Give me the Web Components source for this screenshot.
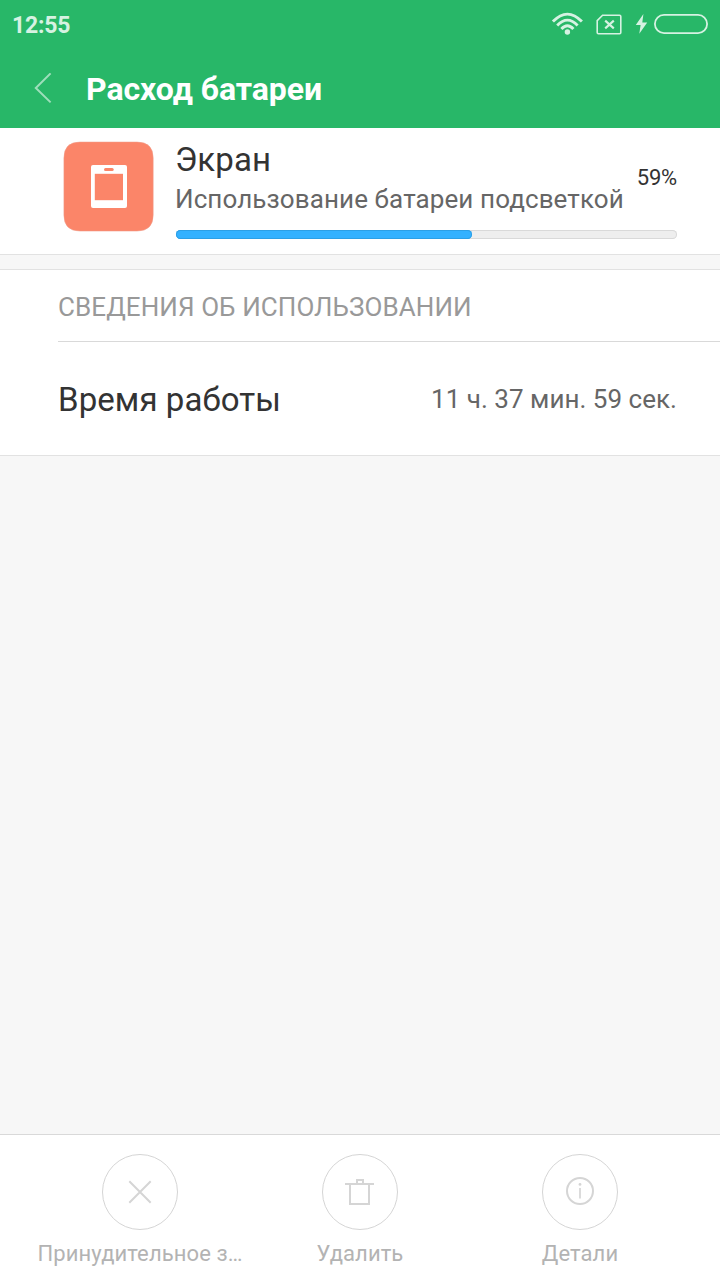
<!DOCTYPE html>
<html lang="ru">
<head>
<meta charset="utf-8">
<title>Расход батареи</title>
<style>
html,body{margin:0;height:100%}
body{font-family:Roboto,"Noto Sans",sans-serif;background:#f7f7f7;color:#333}
</style>
</head>
<body>
<battery-screen></battery-screen>
<script>
const define = (name, html) => {
  const t = document.createElement('template');
  t.innerHTML = html;
  customElements.define(name, class extends HTMLElement {
    constructor() {
      super();
      this.attachShadow({mode: 'open'}).append(t.content.cloneNode(true));
    }
  });
};

define('status-bar', `
<style>
:host{display:flex;justify-content:space-between;height:50px;padding-left:12px;box-sizing:border-box;color:#d6f2e2}
.time{font-weight:700;font-size:23px;line-height:52px;letter-spacing:-.2px}
svg{display:block}
</style>
<span class="time"><slot></slot></span>
<svg width="180" height="50" viewBox="540 0 180 50" fill="none" stroke="currentColor">
  <g stroke-width="2.9">
    <path d="M552.9 21.6Q567.4 6.6 581.9 21.6"/>
    <path d="M557.2 25.4Q567.4 14.8 577.6 25.4"/>
    <path d="M561.4 29Q567.4 22.4 573.4 29"/>
  </g>
  <circle cx="567.4" cy="32" r="2.7" fill="currentColor" stroke="none"/>
  <path d="M602.6 15.2H619.6Q620.8 15.2 620.8 16.4V32.6Q620.8 33.8 619.6 33.8H598.4Q597.2 33.8 597.2 32.6V20.6Z" stroke-width="1.6"/>
  <path d="M605.2 20.6L613.8 28.4M613.8 20.6L605.2 28.4" stroke-width="2.1"/>
  <path d="M643.4 14L635.8 25H640.6L639.3 33.8L647.2 22.4H642.3Z" fill="currentColor" stroke="none"/>
  <rect x="654.9" y="14.9" width="52.2" height="18.2" rx="9.1" stroke-width="1.8"/>
</svg>`);

define('title-bar', `
<style>
:host{display:flex;align-items:center;height:78px;color:#fff;padding-left:34px}
svg{display:block;flex:none}
h1{margin:0 0 0 34px;font-size:32px;line-height:78px;font-weight:700;white-space:nowrap;letter-spacing:-.05px}
</style>
<svg width="18" height="32" viewBox="34 73 18 32" fill="none" stroke="#fff" stroke-opacity=".55" stroke-width="2"><path d="M50.6 73.4L35.8 88L50.6 102.4"/></svg>
<h1><slot></slot></h1>`);

define('screen-icon', `
<style>:host{display:block;width:90px;height:90px}svg{display:block;overflow:visible}</style>
<svg width="90" height="90" viewBox="64 142 90 90">
  <path d="M80 142H137Q153.2 142 153.2 158V215Q153.2 231.1 137 231.1H80Q63.9 231.1 63.9 215V158Q63.9 142 80 142Z" fill="#fb8569" stroke="#ee9d8a" stroke-width=".5"/>
  <rect x="91" y="165" width="36" height="43" rx="2" fill="#fff"/>
  <rect x="104" y="168" width="9.7" height="3" rx="1.5" fill="#fb8569"/>
  <rect x="94.8" y="173.8" width="28.2" height="26.4" fill="#fb8569"/>
</svg>`);

define('usage-bar', `
<style>
:host{display:block;height:9px;box-sizing:border-box;border-radius:5px;background:#eee;box-shadow:inset 0 0 0 1px #d9d9d9}
.fill{height:9px;width:59.1%;border-radius:5px;background:#33b1ff;box-shadow:inset 0 0 0 1px #2c9fe6}
</style>
<div class="fill"></div>`);

define('usage-summary', `
<style>
:host{display:flex;height:126px;background:#fff;padding:0 43px 0 64px;border-bottom:1px solid #e2e2e2;box-sizing:content-box;width:613px}
screen-icon{margin:14px 21.5px 0 0;flex:none}
.body{flex:1;min-width:0}
.row{display:flex;justify-content:space-between;height:102px;margin-left:-.5px}
.name{font-size:33px;line-height:40px;margin-top:12px;letter-spacing:.1px}
.desc{font-size:26px;line-height:34px;margin-top:2px;color:#666;white-space:nowrap;letter-spacing:.1px}
.pct{font-size:22px;line-height:30px;margin-top:35px;letter-spacing:-.2px}
</style>
<screen-icon></screen-icon>
<div class="body">
  <div class="row">
    <div><div class="name"><slot name="name"></slot></div><div class="desc"><slot></slot></div></div>
    <div class="pct"><slot name="percent"></slot></div>
  </div>
  <usage-bar></usage-bar>
</div>`);

define('detail-section', `
<style>
:host{display:block;margin-top:14px;background:#fff;border:solid #e2e2e2;border-width:1px 0;padding-left:58px}
.head{height:71px;border-bottom:1px solid #d9d9d9;font-size:26px;line-height:74px;color:#999;letter-spacing:.09px}
</style>
<div class="head"><slot name="heading"></slot></div>
<slot></slot>`);

define('detail-row', `
<style>
:host{display:flex;justify-content:space-between;height:113px;padding-right:43px;line-height:114px}
.label{font-size:33px;line-height:116px;letter-spacing:.08px}
.value{font-size:26px;color:#666;letter-spacing:.03px}
</style>
<span class="label"><slot></slot></span><span class="value"><slot name="value"></slot></span>`);

define('action-button', `
<style>
:host{display:flex;flex-direction:column;align-items:center;width:220px;color:#b3b3b3}
.ring{width:76px;height:76px;box-sizing:border-box;border:1px solid #d5d5d5;border-radius:50%;margin-top:19px;display:grid;place-items:center}
.label{font-size:22px;line-height:30px;margin-top:9px;white-space:nowrap;letter-spacing:.09px}
::slotted(svg){display:block;fill:none;stroke:#d5d5d5;stroke-width:2}
</style>
<div class="ring"><slot name="icon"></slot></div>
<span class="label"><slot></slot></span>`);

define('battery-screen', `
<style>
:host{display:flex;flex-direction:column;width:720px;height:1280px;background:#f7f7f7;overflow:hidden}
header{background:#28b768;height:128px}
footer{margin-top:auto;display:flex;justify-content:center;height:145px;background:#fff;border-top:1px solid #d9d9d9}
</style>
<header>
  <status-bar>12:55</status-bar>
  <title-bar>Расход батареи</title-bar>
</header>
<usage-summary><span slot="name">Экран</span>Использование батареи подсветкой<span slot="percent">59%</span></usage-summary>
<detail-section>
  <span slot="heading">СВЕДЕНИЯ ОБ ИСПОЛЬЗОВАНИИ</span>
  <detail-row>Время работы<span slot="value">11 ч. 37 мин. 59 сек.</span></detail-row>
</detail-section>
<footer>
  <action-button><svg slot="icon" width="32" height="32" viewBox="124 1176 32 32"><path d="M129.3 1181.3L150.7 1202.7M150.7 1181.3L129.3 1202.7"/></svg>Принудительное з…</action-button>
  <action-button><svg slot="icon" width="32" height="32" viewBox="344 1176 32 32"><path d="M345 1184H374M350 1184V1204H369V1184M357 1184V1180H363V1184"/></svg>Удалить</action-button>
  <action-button><svg slot="icon" width="32" height="32" viewBox="564 1176 32 32"><circle cx="580" cy="1191" r="13"/><path d="M580 1188V1198.6" stroke-width="1.7"/><circle cx="580" cy="1184.4" r="1.4" style="fill:#d5d5d5;stroke:none"/></svg>Детали</action-button>
</footer>`);
</script>
</body>
</html>
